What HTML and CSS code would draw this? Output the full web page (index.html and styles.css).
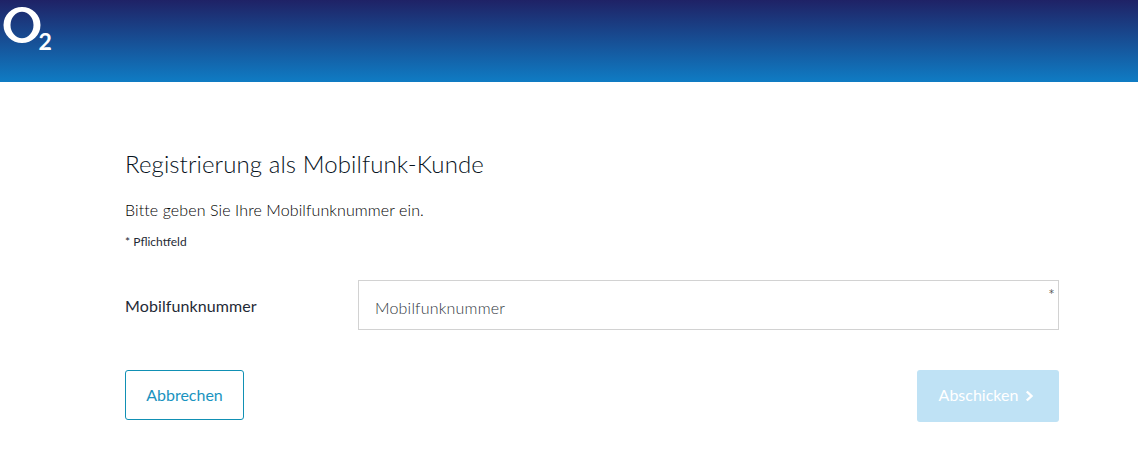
FILE: index.html
```html
<!DOCTYPE html>
<html lang="de">
<head>
<meta charset="utf-8">
<title>Registrierung</title>
<link rel="stylesheet" href="styles.css">
</head>
<body>
<header class="topbar">
  <svg class="logo" width="56" height="56" viewBox="0 0 56 56" aria-label="O2">
    <path fill="#fff" fill-rule="evenodd" d="M3.5 25a18.5 18 0 1 0 37 0a18.5 18 0 1 0-37 0ZM10.5 25a11.5 13.2 0 1 1 23 0a11.5 13.2 0 1 1-23 0Z"/>
    <text class="logo-two" x="38.5" y="50">2</text>
  </svg>
</header>
<main class="content">
  <h1 class="title">Registrierung als Mobilfunk-Kunde</h1>
  <p class="intro">Bitte geben Sie Ihre Mobilfunknummer ein.</p>
  <p class="note">* Pflichtfeld</p>
  <div class="field-row">
    <label class="field-label" for="nr">Mobilfunknummer</label>
    <div class="input-wrap">
      <input class="field-input" id="nr" type="text" placeholder="Mobilfunknummer">
      <span class="req">*</span>
    </div>
  </div>
  <div class="actions">
    <button class="btn btn-outline" type="button">Abbrechen</button>
    <button class="btn btn-primary" type="button">Abschicken
      <svg class="chev" width="9" height="12" viewBox="0 0 9 12"><path d="M1.8 1.5 6.5 6 1.8 10.5" fill="none" stroke="#fff" stroke-width="2.4"/></svg>
    </button>
  </div>
</main>
</body>
</html>
```
FILE: styles.css
```css
* { box-sizing: border-box; }
html, body { margin: 0; padding: 0; background: #fff; }
body { font-family: Lato, "Noto Sans", sans-serif; color: #1f2a36; height: 474px; overflow: hidden; }
.topbar { height: 82px; background: linear-gradient(180deg, #1f2266 0%, #0f7cc4 100%); display: flex; align-items: flex-start; }
.logo { display: block; }
.logo-two { font-family: Lato, sans-serif; font-size: 23px; font-weight: 700; fill: #fff; }
.content { width: 934px; margin-left: 125px; padding-top: 67px; }
.title { margin: 0; font-size: 24px; font-weight: 300; line-height: 30px; letter-spacing: 0.1px; color: #06121c; }
.intro { margin: 21px 0 0; font-size: 16px; font-weight: 300; line-height: 20px; letter-spacing: 0.1px; color: #000; }
.note { margin: 14px 0 0; font-size: 12px; font-weight: 400; line-height: 16px; color: #1f2a36; }
.field-row { display: flex; align-items: center; margin-top: 30px; }
.field-label { width: 233px; font-size: 16px; font-weight: 400; letter-spacing: 0.1px; color: #1f2a36; }
.input-wrap { position: relative; flex: 1; }
.field-input { display: block; width: 100%; height: 50px; border: 1px solid #d2d2d2; padding: 5px 16px 0; font: 300 16px Lato, sans-serif; letter-spacing: 0.2px; outline: none; background: #fff; }
.field-input::placeholder { color: #2f363d; opacity: 1; }
.req { position: absolute; top: 7px; right: 5px; font-family: "DejaVu Sans", sans-serif; font-size: 10px; line-height: 14px; color: #555; }
.actions { display: flex; justify-content: space-between; align-items: flex-start; margin-top: 40px; }
.btn { font: 16px Lato, sans-serif; border-radius: 3px; padding: 0 0 2px; }
.btn-outline { width: 119px; height: 50px; background: #fff; border: 1px solid #1190b4; color: #1a93c0; }
.btn-primary { width: 142px; height: 52px; background: #bfe2f5; border: 0; color: #fff; display: flex; align-items: center; justify-content: center; gap: 7px; padding: 0 3px 4px 0; }
.chev { display: block; margin-top: 4px; }
```
